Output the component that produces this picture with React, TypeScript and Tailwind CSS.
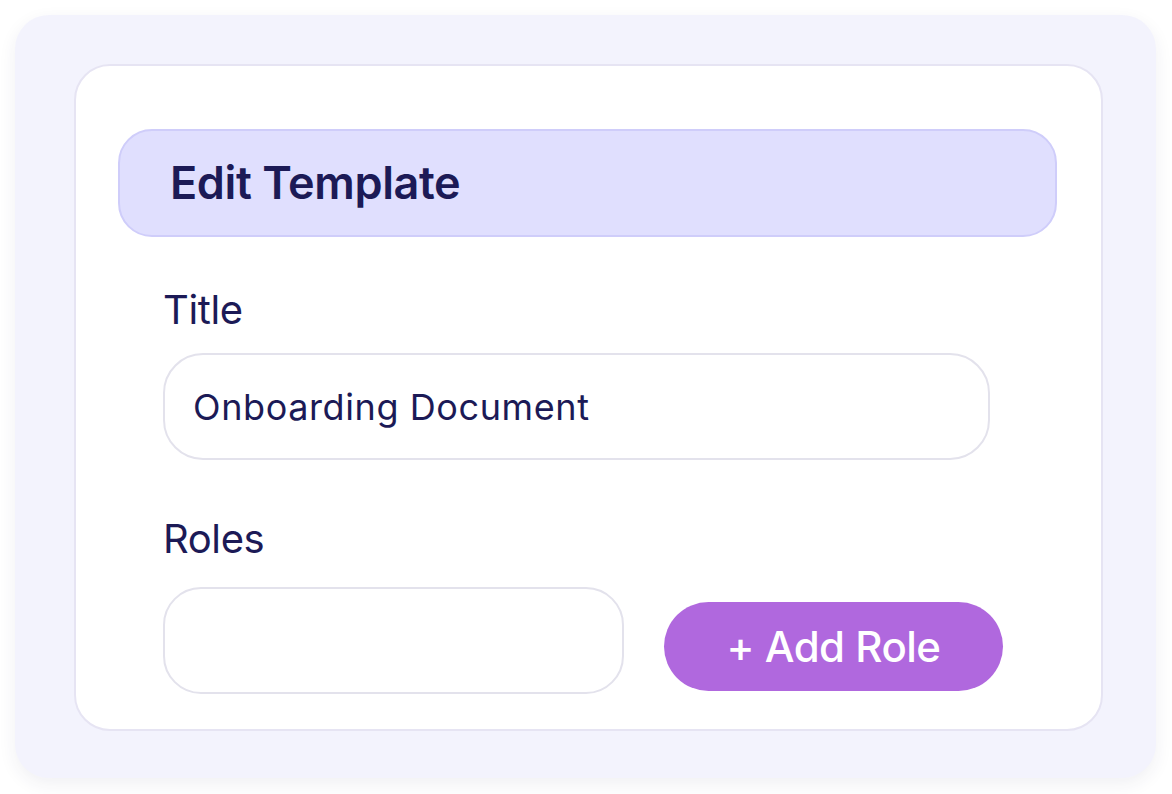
import React from 'react';

const font = { fontFamily: 'Inter, "Noto Sans", sans-serif' };

const Label: React.FC<{ children: React.ReactNode }> = ({ children }) => (
  <div className="text-[40px] leading-[40px] text-[#1c1a56] font-normal tracking-[-0.4px]">{children}</div>
);

export default function App() {
  return (
    <div className="w-[1172px] h-[794px] bg-white p-[15px]" style={font}>
      {/* outer panel */}
      <div className="w-[1141px] h-[763px] rounded-[34px] bg-[#f3f3fd] shadow-[0_6px_18px_rgba(40,40,80,0.07)] pt-[49px] pl-[59px]">
        {/* card */}
        <div className="w-[1029px] h-[667px] rounded-[36px] bg-white border-2 border-[#e6e4f3] pt-[63px] pl-[42px]">
          <div className="w-[939px] h-[108px] rounded-[34px] bg-[#e0dffe] border-2 border-[#cfcdfa] flex items-center pl-[50px]">
            <h1 className="text-[45px] leading-[46px] font-semibold text-[#1c1a56] tracking-[-0.4px]">Edit Template</h1>
          </div>

          <div className="pl-[45px]">
            <div className="mt-[53px]">
              <Label>Title</Label>
            </div>
            <div className="mt-[23px] w-[827px] h-[107px] rounded-[40px] border-2 border-[#e3e2ec] flex items-center pl-[28px]">
              <span className="text-[36px] leading-[36px] text-[#1c1a56] tracking-[0.6px]">Onboarding Document</span>
            </div>

            <div className="mt-[59px]">
              <Label>Roles</Label>
            </div>
            <div className="mt-[28px] flex items-start gap-[40px]">
              <div className="w-[461px] h-[107px] rounded-[38px] border-2 border-[#e3e2ec]" />
              <button className="w-[339px] h-[89px] mt-[15px] rounded-full bg-[#b068de] text-white text-[42px] leading-[44px] font-medium tracking-[-0.5px]">
                + Add Role
              </button>
            </div>
          </div>
        </div>
      </div>
    </div>
  );
}
